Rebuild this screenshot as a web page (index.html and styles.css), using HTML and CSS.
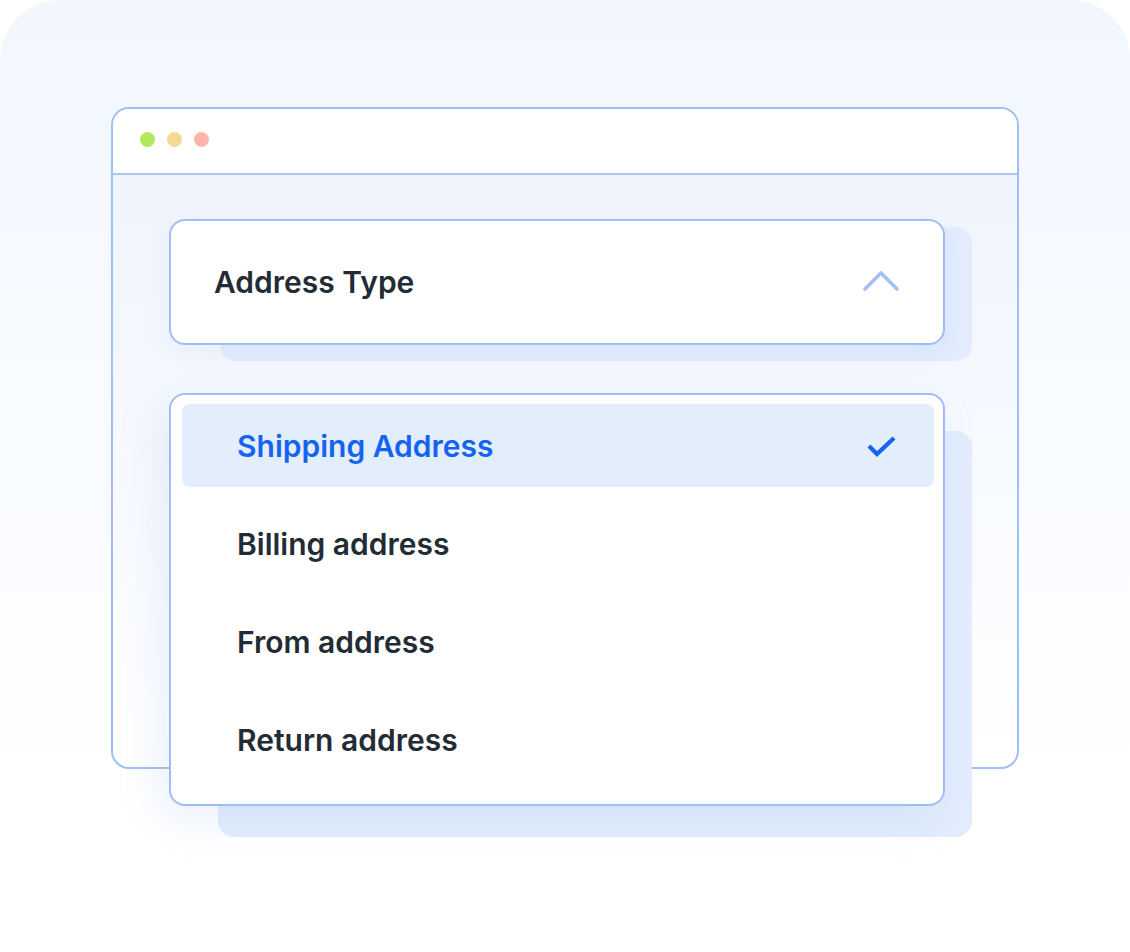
FILE: index.html
```html
<!DOCTYPE html>
<html lang="en">
<head>
  <meta charset="UTF-8">
  <title>Address Type Select</title>
  <link rel="stylesheet" href="styles.css">
</head>
<body>
  <div class="stage">
    <div class="window">
      <div class="window-bar">
        <span class="dot dot-green"></span>
        <span class="dot dot-yellow"></span>
        <span class="dot dot-red"></span>
      </div>

      <div class="window-body">
        <div class="select">
          <span class="select-label">Address Type</span>
          <svg class="chevron" width="38" height="22" viewBox="0 0 38 22">
            <path d="M3 19 L19 3 L35 19" fill="none" stroke="#a3c0f6" stroke-width="3.6" stroke-linecap="round" stroke-linejoin="round"/>
          </svg>
        </div>

        <ul class="options">
          <li class="option selected">
            Shipping Address
            <svg class="check" width="32" height="24" viewBox="0 0 32 24">
              <path d="M3 12 L11 20 L28 4" fill="none" stroke="#1563f0" stroke-width="4.2" stroke-linejoin="miter"/>
            </svg>
          </li>
          <li class="option">Billing address</li>
          <li class="option">From address</li>
          <li class="option">Return address</li>
        </ul>
      </div>
    </div>
  </div>
</body>
</html>
```

FILE: styles.css
```css
* { box-sizing: border-box; }
body {
  margin: 0;
  background: #fff;
  font-family: Inter, "Noto Sans", sans-serif;
}
.stage {
  width: 1130px;
  height: 952px;
  padding: 107px 0 0 111px;
  border-radius: 60px 60px 0 0;
  background: linear-gradient(180deg, #f2f7fe 0%, #f8fbff 45%, #fff 85%);
}
.window {
  width: 908px;
  height: 662px;
  border: 2px solid #a0bff3;
  border-radius: 18px;
  background: linear-gradient(180deg, #eef3fd 0%, #f6f9fe 50%, #fff 100%);
}
.window-bar {
  height: 66px;
  display: flex;
  align-items: center;
  gap: 12px;
  padding-left: 27px;
  padding-bottom: 4px;
  background: #fff;
  border-radius: 16px 16px 0 0;
  border-bottom: 2px solid #a9c5f3;
}
.dot {
  width: 15px;
  height: 15px;
  border-radius: 50%;
}
.dot-green { background: #b2e85e; }
.dot-yellow { background: #f4d993; }
.dot-red { background: #ffb5aa; }

.window-body {
  position: relative;
  z-index: 0;
  padding: 44px 0 0 56px;
}
.select {
  position: relative;
  width: 776px;
  height: 126px;
  display: flex;
  align-items: center;
  justify-content: space-between;
  padding: 0 43px 0 43px;
  background: #fff;
  border: 2px solid #9fbef3;
  border-radius: 16px;
  box-shadow: 0 8px 24px rgba(150, 180, 230, 0.12);
}
.select::before {
  content: "";
  position: absolute;
  z-index: -1;
  left: 49px;
  top: 6px;
  right: -29px;
  bottom: -18px;
  background: #e2ecfd;
  border-radius: 16px;
}
.select-label {
  font-size: 30px;
  font-weight: 600;
  color: #232c35;
}
.chevron { display: block; margin-top: -2px; }

.options {
  position: relative;
  list-style: none;
  margin: 48px 0 0;
  width: 776px;
  height: 413px;
  padding: 9px 9px 0 11px;
  display: flex;
  flex-direction: column;
  gap: 15px;
  background: #fff;
  border: 2px solid #9fbef3;
  border-radius: 16px;
  box-shadow: -10px 14px 40px rgba(150, 180, 230, 0.18);
}
.options::before {
  content: "";
  position: absolute;
  z-index: -1;
  left: 47px;
  top: 36px;
  right: -29px;
  bottom: -33px;
  background: #e2ecfd;
  border-radius: 16px;
}
.option {
  height: 83px;
  display: flex;
  align-items: center;
  justify-content: space-between;
  padding: 0 36px 0 55px;
  font-size: 30px;
  font-weight: 600;
  color: #232c35;
  border-radius: 8px;
}
.option.selected {
  background: #e3eefd;
  color: #1563f0;
}
.check { display: block; }
```
